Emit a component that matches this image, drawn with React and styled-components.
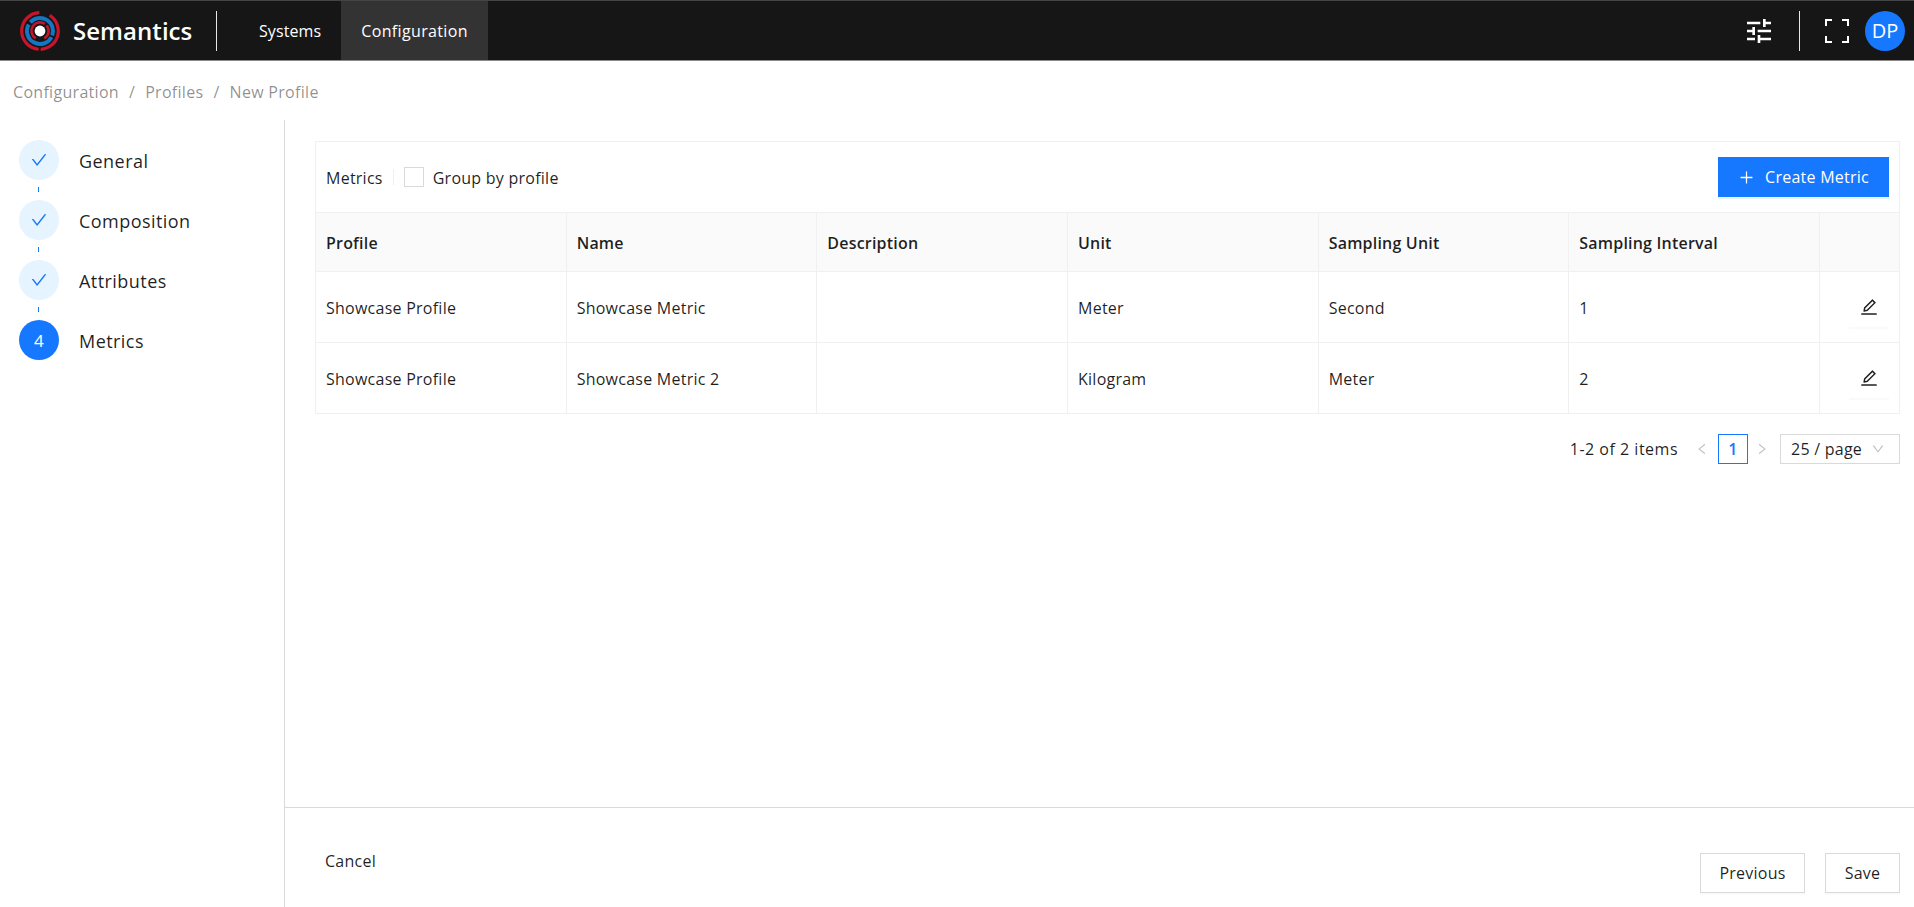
import React from 'react'
import styled, { createGlobalStyle } from 'styled-components'
import {
  AiOutlineCheck,
  AiOutlineDown,
  AiOutlineEdit,
  AiOutlineLeft,
  AiOutlinePlus,
  AiOutlineRight,
} from 'react-icons/ai'
import { MdTune } from 'react-icons/md'

const FONT = '"Open Sans", "Noto Sans", "Liberation Sans", sans-serif'

const steps = ['General', 'Composition', 'Attributes', 'Metrics']
const columns = ['Profile', 'Name', 'Description', 'Unit', 'Sampling Unit', 'Sampling Interval']
const metrics = [
  ['Showcase Profile', 'Showcase Metric', '', 'Meter', 'Second', '1'],
  ['Showcase Profile', 'Showcase Metric 2', '', 'Kilogram', 'Meter', '2'],
]

function arc(r, from, to) {
  const point = a => {
    const rad = ((a - 90) * Math.PI) / 180
    return `${20 + r * Math.cos(rad)} ${20 + r * Math.sin(rad)}`
  }
  const large = to - from > 180 ? 1 : 0
  return `M${point(from)} A${r} ${r} 0 ${large} 1 ${point(to)}`
}

function Logo() {
  return (
    <svg width="40" height="40" viewBox="0 0 40 40" fill="none">
      <path d={arc(18.3, 32, 178)} stroke="#c8152b" strokeWidth="3.2" />
      <path d={arc(18.3, 184, 358)} stroke="#c8152b" strokeWidth="3.2" />
      <path d={arc(13, 118, 300)} stroke="#1277c4" strokeWidth="4" />
      <path d={arc(13, 312, 470)} stroke="#1277c4" strokeWidth="4" />
      <path d={arc(8.6, 210, 395)} stroke="#c8152b" strokeWidth="2.6" />
      <path d={arc(8.6, 50, 150)} stroke="#c8152b" strokeWidth="2.6" />
      <circle cx="20" cy="20" r="5.4" fill="#fff" />
    </svg>
  )
}

function FullscreenIcon() {
  return (
    <svg width="24" height="24" viewBox="0 0 24 24" fill="none" stroke="#fff" strokeWidth="2">
      <path d="M1 7V1h6M17 1h6v6M23 17v6h-6M7 23H1v-6" />
    </svg>
  )
}

export default function App() {
  return (
    <>
      <GlobalStyle />
      <Page>
        <Header>
          <Brand>
            <Logo />
            <BrandName>Semantics</BrandName>
          </Brand>
          <HeaderDivider />
          <Nav>
            <NavItem>Systems</NavItem>
            <NavItem $active>Configuration</NavItem>
          </Nav>
          <HeaderRight>
            <HeaderIcon>
              <MdTune size={32} />
            </HeaderIcon>
            <HeaderDivider />
            <FullscreenSlot>
              <FullscreenIcon />
            </FullscreenSlot>
            <Avatar>DP</Avatar>
          </HeaderRight>
        </Header>

        <Breadcrumb>
          <span>Configuration</span>
          <Slash>/</Slash>
          <span>Profiles</span>
          <Slash>/</Slash>
          <span>New Profile</span>
        </Breadcrumb>

        <Body>
          <Sidebar>
            {steps.map((step, i) => (
              <Step key={step}>
                <StepCircle $current={i === 3}>
                  {i === 3 ? '4' : <AiOutlineCheck size={18} />}
                </StepCircle>
                <StepLabel>{step}</StepLabel>
                {i < 3 && <StepTick />}
              </Step>
            ))}
          </Sidebar>

          <Main>
            <Content>
              <Card>
                <Toolbar>
                  <ToolbarTitle>Metrics</ToolbarTitle>
                  <ToolbarDivider />
                  <Checkbox />
                  <CheckboxLabel>Group by profile</CheckboxLabel>
                  <PrimaryButton>
                    <AiOutlinePlus size={17} />
                    Create Metric
                  </PrimaryButton>
                </Toolbar>
                <TableGrid>
                  {columns.map(col => (
                    <HeadCell key={col}>{col}</HeadCell>
                  ))}
                  <HeadCell />
                  {metrics.map((row, r) => (
                    <React.Fragment key={r}>
                      {row.map((value, c) => (
                        <Cell key={c}>{value}</Cell>
                      ))}
                      <ActionCell>
                        <IconButton>
                          <AiOutlineEdit size={20} />
                        </IconButton>
                      </ActionCell>
                    </React.Fragment>
                  ))}
                </TableGrid>
              </Card>

              <Pagination>
                <PageTotal>1-2 of 2 items</PageTotal>
                <PageArrow>
                  <AiOutlineLeft size={14} />
                </PageArrow>
                <PageNumber>1</PageNumber>
                <PageArrow>
                  <AiOutlineRight size={14} />
                </PageArrow>
                <PageSize>
                  25 / page
                  <AiOutlineDown size={14} color="#bfbfbf" />
                </PageSize>
              </Pagination>
            </Content>

            <Footer>
              <TextButton>Cancel</TextButton>
              <FooterActions>
                <OutlineButton $width={105}>Previous</OutlineButton>
                <OutlineButton $width={75}>Save</OutlineButton>
              </FooterActions>
            </Footer>
          </Main>
        </Body>
      </Page>
    </>
  )
}

const GlobalStyle = createGlobalStyle`
  html, body, #root {
    margin: 0;
    height: 100%;
  }
  body {
    font-family: ${FONT};
    font-size: 16px;
    letter-spacing: 0.25px;
    color: rgba(0, 0, 0, 0.88);
    background: #fff;
    overflow: hidden;
  }
  * {
    box-sizing: border-box;
  }
`

const Page = styled.div`
  height: 907px;
  display: flex;
  flex-direction: column;
`

const Header = styled.header`
  height: 61px;
  flex: none;
  display: flex;
  align-items: center;
  background: #161616;
  border-top: 1px solid #444;
  border-bottom: 1px solid #8a8a8a;
  color: #fff;
`

const Brand = styled.div`
  display: flex;
  align-items: center;
  gap: 13px;
  padding-left: 20px;
  width: 216px;
`

const BrandName = styled.span`
  font-size: 24px;
  font-weight: 600;
  letter-spacing: 0.05px;
`

const HeaderDivider = styled.div`
  width: 1px;
  height: 40px;
  background: #e8e8e8;
`

const Nav = styled.nav`
  display: flex;
  align-self: stretch;
  margin-left: 22px;
`

const NavItem = styled.div`
  display: flex;
  align-items: center;
  padding: 0 20px;
  letter-spacing: ${p => (p.$active ? '0.35px' : '0.1px')};
  background: ${p => (p.$active ? '#333' : 'transparent')};
`

const HeaderRight = styled.div`
  margin-left: auto;
  display: flex;
  align-items: center;
  padding-right: 9px;
`

const HeaderIcon = styled.div`
  display: flex;
  margin-right: 24px;
`

const FullscreenSlot = styled.div`
  display: flex;
  margin: 0 16px 0 25px;
`

const Avatar = styled.div`
  width: 40px;
  height: 40px;
  border-radius: 50%;
  background: #1677ff;
  display: flex;
  align-items: center;
  justify-content: center;
  font-size: 20px;
  letter-spacing: 0;
`

const Breadcrumb = styled.div`
  height: 59px;
  flex: none;
  display: flex;
  align-items: center;
  padding: 2px 0 0 13px;
  letter-spacing: 0.3px;
  color: rgba(0, 0, 0, 0.45);
`

const Slash = styled.span`
  margin: 0 10px;
`

const Body = styled.div`
  flex: 1;
  min-height: 0;
  display: flex;
`

const Sidebar = styled.aside`
  width: 285px;
  flex: none;
  border-right: 1px solid #d9d9d9;
  padding: 20px 0 0 19px;
  display: flex;
  flex-direction: column;
  gap: 20px;
`

const Step = styled.div`
  position: relative;
  display: flex;
  align-items: center;
  gap: 20px;
  height: 40px;
`

const StepCircle = styled.div`
  width: 40px;
  height: 40px;
  border-radius: 50%;
  display: flex;
  align-items: center;
  justify-content: center;
  font-size: 17px;
  background: ${p => (p.$current ? '#1677ff' : '#e6f4ff')};
  color: ${p => (p.$current ? '#fff' : '#1677ff')};
`

const StepLabel = styled.span`
  font-size: 18px;
  letter-spacing: 0.45px;
  padding-top: 1px;
`

const StepTick = styled.span`
  position: absolute;
  left: 19px;
  top: 47px;
  width: 1px;
  height: 5px;
  background: #1677ff;
`

const Main = styled.main`
  flex: 1;
  min-width: 0;
  display: flex;
  flex-direction: column;
`

const Content = styled.div`
  flex: 1;
  padding: 21px 14px 0 30px;
`

const Card = styled.div`
  border: 1px solid #f0f0f0;
  border-bottom: 0;
`

const Toolbar = styled.div`
  height: 70px;
  display: flex;
  align-items: center;
  padding: 0 10px;
`

const ToolbarTitle = styled.span`
  padding-top: 2px;
`

const ToolbarDivider = styled.span`
  width: 1px;
  height: 16px;
  background: #f0f0f0;
  margin: 0 10px;
`

const Checkbox = styled.span`
  width: 20px;
  height: 20px;
  border: 1px solid #d9d9d9;
  margin-right: 9px;
`

const CheckboxLabel = styled.span`
  padding-top: 2px;
`

const PrimaryButton = styled.button`
  margin-left: auto;
  width: 171px;
  height: 40px;
  display: flex;
  align-items: center;
  justify-content: center;
  gap: 10px;
  border: 0;
  background: #1677ff;
  color: #fff;
  font: inherit;
  letter-spacing: inherit;
  box-shadow: 0 2px 0 rgba(5, 145, 255, 0.1);
`

const TableGrid = styled.div`
  display: grid;
  grid-template-columns: repeat(6, 1fr) 79px;
  grid-template-rows: 60px 71px 71px;
`

const HeadCell = styled.div`
  display: flex;
  align-items: center;
  padding: 1px 10px 0;
  font-weight: 600;
  letter-spacing: 0.2px;
  background: #fafafa;
  border-top: 1px solid #f0f0f0;
  border-bottom: 1px solid #f0f0f0;
  border-right: 1px solid #f0f0f0;

  &:nth-child(7) {
    border-right: 0;
  }
`

const Cell = styled.div`
  display: flex;
  align-items: center;
  padding: 2px 10px 0;
  border-bottom: 1px solid #f0f0f0;
  border-right: 1px solid #f0f0f0;
`

const ActionCell = styled.div`
  display: flex;
  align-items: center;
  justify-content: flex-end;
  padding-right: 10px;
  border-bottom: 1px solid #f0f0f0;
`

const IconButton = styled.button`
  width: 40px;
  height: 40px;
  display: flex;
  align-items: center;
  justify-content: center;
  padding: 0;
  border: 0;
  background: #fff;
  color: rgba(0, 0, 0, 0.88);
  box-shadow: 0 2px 0 rgba(0, 0, 0, 0.02);
`

const Pagination = styled.div`
  margin-top: 20px;
  height: 30px;
  display: flex;
  align-items: center;
  justify-content: flex-end;
`

const PageTotal = styled.span`
  margin-right: 12px;
  letter-spacing: 0.5px;
`

const PageArrow = styled.span`
  width: 24px;
  display: flex;
  justify-content: center;
  color: #bfbfbf;
`

const PageNumber = styled.span`
  width: 30px;
  height: 30px;
  margin: 0 2px 0 4px;
  display: flex;
  align-items: center;
  justify-content: center;
  border: 1px solid #1677ff;
  color: #1677ff;
  font-weight: 600;
`

const PageSize = styled.div`
  width: 120px;
  height: 30px;
  margin-left: 6px;
  padding: 0 14px 0 10px;
  display: flex;
  align-items: center;
  justify-content: space-between;
  border: 1px solid #d9d9d9;
`

const Footer = styled.footer`
  height: 100px;
  flex: none;
  display: flex;
  justify-content: space-between;
  padding: 43px 14px 0 40px;
  border-top: 1px solid #d9d9d9;
`

const TextButton = styled.span`
  line-height: 20px;
`

const FooterActions = styled.div`
  display: flex;
  gap: 20px;
  margin-top: 2px;
`

const OutlineButton = styled.button`
  width: ${p => p.$width}px;
  height: 40px;
  border: 1px solid #d9d9d9;
  background: #fff;
  color: rgba(0, 0, 0, 0.88);
  font: inherit;
  letter-spacing: inherit;
  box-shadow: 0 2px 0 rgba(0, 0, 0, 0.02);
`
